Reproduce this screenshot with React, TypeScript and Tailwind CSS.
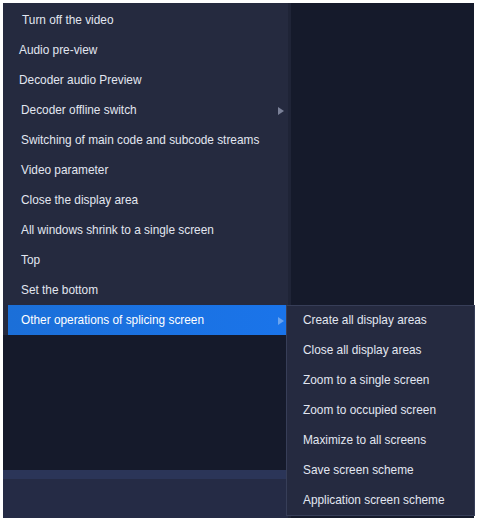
import React from 'react';

const items: { label: string; pl: string; arrow?: boolean; active?: boolean }[] = [
  { label: 'Turn off the video', pl: 'pl-[14px]' },
  { label: 'Audio pre-view', pl: 'pl-[11px]' },
  { label: 'Decoder audio Preview', pl: 'pl-[11px]' },
  { label: 'Decoder offline switch', pl: 'pl-[13px]', arrow: true },
  { label: 'Switching of main code and subcode streams', pl: 'pl-[13px]' },
  { label: 'Video parameter', pl: 'pl-[13px]' },
  { label: 'Close the display area', pl: 'pl-[13px]' },
  { label: 'All windows shrink to a single screen', pl: 'pl-[13px]' },
  { label: 'Top', pl: 'pl-[13px]' },
  { label: 'Set the bottom', pl: 'pl-[13px]' },
  { label: 'Other operations of splicing screen', pl: 'pl-[13px]', arrow: true, active: true },
];

const subItems = [
  'Create all display areas',
  'Close all display areas',
  'Zoom to a single screen',
  'Zoom to occupied screen',
  'Maximize to all screens',
  'Save screen scheme',
  'Application screen scheme',
];

export default function App() {
  return (
    <div className="relative w-[479px] h-[523px] bg-white pt-[3px] pl-[3px] pr-[5px] pb-[5px] font-['Liberation_Sans',Arial,sans-serif] text-[11.85px] text-[#e2e6f0]">
      <div className="flex h-full bg-[#151a2b]">
        <div className="w-[285px] flex flex-col">
          <div className="bg-[#252a3f] pt-[2px] pl-[5px]">
            {items.map((it) => (
              <div
                key={it.label}
                className={`h-[30px] flex items-center justify-between pr-[4px] pt-px ${it.pl} ${
                  it.active ? 'bg-gradient-to-r from-[#1b6fd8] to-[#1a74ea] text-white' : ''
                }`}
              >
                <span>{it.label}</span>
                {it.arrow && (
                  <span className={`w-0 h-0 border-y-[4px] border-y-transparent border-l-[6px] ${it.active ? 'border-l-[#6aa4ef]' : 'border-l-[#7b8198]'}`} />
                )}
              </div>
            ))}
          </div>
          <div className="flex-1" />
          <div className="h-[48px] bg-[#252b45] border-t-[9px] border-[#2b3558]" />
        </div>
        <div className="w-[3px] bg-[#1f2437]" />
        <div className="flex-1" />
      </div>

      <div className="absolute left-[286px] top-[305px] w-[189px] h-[211px] bg-[#252a40] border border-[#373e58]">
        {subItems.map((s) => (
          <div key={s} className="h-[30px] flex items-center pl-[16px]">
            {s}
          </div>
        ))}
      </div>
    </div>
  );
}
